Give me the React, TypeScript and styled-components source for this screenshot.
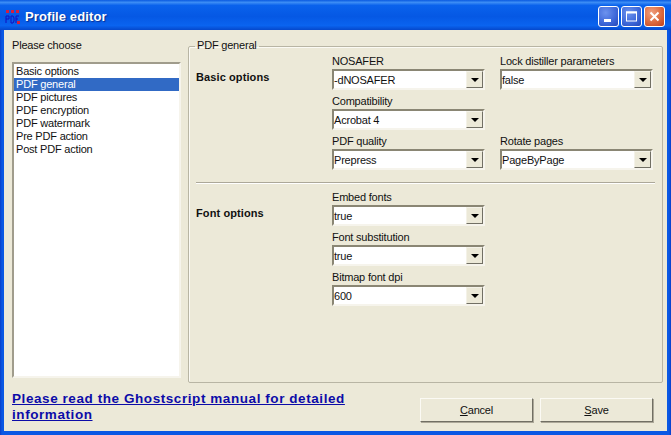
import React from 'react';
import styled, { createGlobalStyle } from 'styled-components';

const GlobalStyle = createGlobalStyle`
	html, body {
		margin: 0;
		padding: 0;
		background: #0a50d8;
	}
	body {
		font-family: 'Liberation Sans', Arial, sans-serif;
		font-size: 11px;
		letter-spacing: -0.2px;
		color: #111;
	}
`;

const Win = styled.div`
	width: 671px;
	height: 435px;
	display: flex;
	flex-direction: column;
	overflow: hidden;
	background: linear-gradient(90deg, #0a3ec8 0, #0a58e4 2px, #0a58e4 669px, #0a3ec8 671px);
`;
const TitleBar = styled.div`
	height: 30px;
	flex: none;
	box-sizing: border-box;
	display: flex;
	align-items: center;
	padding: 3px 6px 0 5px;
	background: linear-gradient(180deg, #0a5ae0 0%, #3c8df5 8%, #0a62ec 18%, #0558e4 55%, #0a64f0 85%, #0548cc 100%);
`;
const TitleText = styled.div`
	flex: 1;
	margin-left: 4px;
	color: #fff;
	font-size: 13px;
	font-weight: bold;
	letter-spacing: 0.1px;
	text-shadow: 1px 1px 1px #0a2f90;
`;
const WinBtn = styled.div<{ $close?: boolean }>`
	width: 21px;
	height: 21px;
	margin-left: 2px;
	box-sizing: border-box;
	border: 1px solid #fff;
	border-radius: 3px;
	display: flex;
	align-items: center;
	justify-content: center;
	background: ${(p) =>
		p.$close
			? 'radial-gradient(circle at 35% 30%, #f0a080 0%, #dc6a3e 55%, #c03f1c 100%)'
			: 'radial-gradient(circle at 35% 30%, #6c92ee 0%, #3c66d8 60%, #2448b8 100%)'};
`;
const Body = styled.div`
	flex: 1;
	margin: 0 4px 4px 4px;
	background: #ece9d8;
	display: flex;
	flex-direction: column;
	padding: 10px 4px 0 8px;
	min-height: 0;
`;
const Main = styled.div`
	display: flex;
	gap: 7px;
	height: 347px;
	flex: none;
`;
const Side = styled.div`
	width: 169px;
	flex: none;
	display: flex;
	flex-direction: column;
`;
const SideLabel = styled.div`
	height: 22px;
	line-height: 10px;
`;
const ListBox = styled.div`
	box-sizing: border-box;
	height: 316px;
	padding: 1px 0 0;
	background: #fff;
	border: 2px solid;
	border-color: #a09c8c #f6f4ec #f6f4ec #a09c8c;
`;
const ListRow = styled.div<{ $on?: boolean }>`
	height: 13px;
	line-height: 13px;
	padding-left: 2px;
	color: ${(p) => (p.$on ? '#fff' : '#111')};
	background: ${(p) => (p.$on ? '#316ac5' : 'transparent')};
`;
const Group = styled.fieldset`
	flex: 1;
	margin: -1px 0 0;
	box-sizing: border-box;
	height: 344px;
	padding: 0 0 0 7px;
	border: 1px solid #b8b5a4;
	border-radius: 2px;
	box-shadow: inset 1px 1px 0 #fbfaf4;
	min-width: 0;
`;
const Legend = styled.legend`
	padding: 0 2px 2px;
	margin-left: -1px;
	line-height: 12px;
`;
const Section = styled.div<{ $height: number; $top: number }>`
	display: flex;
	box-sizing: border-box;
	height: ${(p) => p.$height}px;
	padding-top: ${(p) => p.$top}px;
`;
const SectionTitle = styled.div<{ $pad: number }>`
	width: 136px;
	flex: none;
	padding-top: ${(p) => p.$pad}px;
	font-weight: bold;
	letter-spacing: 0.1px;
	line-height: 13px;
`;
const Column = styled.div<{ $right?: boolean }>`
	width: 153px;
	flex: none;
	margin-left: ${(p) => (p.$right ? '15px' : '0')};
	display: flex;
	flex-direction: column;
`;
const Field = styled.div`
	height: 40px;
`;
const FieldLabel = styled.div`
	height: 15px;
	line-height: 12px;
	padding-top: 1px;
	box-sizing: border-box;
	white-space: nowrap;
`;
const Combo = styled.div`
	box-sizing: border-box;
	height: 21px;
	display: flex;
	align-items: center;
	background: #fff;
	border: 2px solid;
	border-color: #8a8674 #f6f4ec #f6f4ec #8a8674;
`;
const ComboText = styled.div`
	flex: 1;
`;
const ComboArrow = styled.div`
	width: 17px;
	height: 17px;
	box-sizing: border-box;
	display: flex;
	align-items: center;
	justify-content: center;
	background: #ece9d8;
	border: 1px solid;
	border-color: #f4f2e8 #716f64 #716f64 #f4f2e8;
`;
const Caret = styled.div`
	width: 0;
	height: 0;
	border-left: 4px solid transparent;
	border-right: 4px solid transparent;
	border-top: 4px solid #000;
`;
const Separator = styled.div`
	height: 2px;
	width: 459px;
	background: linear-gradient(180deg, #aca899 50%, #fff 50%);
`;
const Footer = styled.div`
	flex: 1;
	display: flex;
	align-items: flex-start;
	justify-content: space-between;
	padding-top: 4px;
`;
const ManualLink = styled.a`
	width: 345px;
	color: #0c0ca8;
	font-size: 13.5px;
	line-height: 16px;
	font-weight: bold;
	letter-spacing: 0.57px;
	text-decoration: underline;
`;
const Buttons = styled.div`
	display: flex;
	gap: 7px;
	margin-right: 10px;
	padding-top: 7px;
`;
const Button = styled.div`
	width: 113px;
	height: 24px;
	box-sizing: border-box;
	display: flex;
	align-items: center;
	justify-content: center;
	background: #ece9d8;
	border: 1px solid;
	border-color: #fbfaf4 #716f64 #716f64 #fbfaf4;
	box-shadow: 1px 1px 0 #aca899;
`;

type FieldDef = { label?: string; value?: string };

const Select = ({ label, value }: FieldDef) => (
	<Field>
		<FieldLabel>{label}</FieldLabel>
		<Combo>
			<ComboText>{value}</ComboText>
			<ComboArrow>
				<Caret />
			</ComboArrow>
		</Combo>
	</Field>
);

const items = [
	'Basic options',
	'PDF general',
	'PDF pictures',
	'PDF encryption',
	'PDF watermark',
	'Pre PDF action',
	'Post PDF action',
];

const AppIcon = () => (
	<svg width="16" height="16" viewBox="0 0 16 16">
		<rect x="1" y="1" width="3" height="3" fill="#d02040" />
		<rect x="6" y="1" width="3" height="3" fill="#d02040" />
		<rect x="11" y="1" width="3" height="3" fill="#d02040" />
		<path d="M1 7v7M1 7h3v3H1M6 7v7h2l1-2v-3l-1-2H6M11 7v7M11 7h3M11 10h2" stroke="#1010c0" strokeWidth="1" fill="none" />
		<rect x="12" y="12" width="3" height="3" fill="#d02040" />
	</svg>
);

const App = (): JSX.Element => (
	<Win>
		<GlobalStyle />
		<TitleBar>
			<AppIcon />
			<TitleText>Profile editor</TitleText>
			<WinBtn>
				<svg width="13" height="13" viewBox="0 0 13 13">
					<rect x="2" y="9" width="7" height="3" fill="#fff" />
				</svg>
			</WinBtn>
			<WinBtn>
				<svg width="13" height="13" viewBox="0 0 13 13">
					<rect x="1.5" y="2" width="10" height="9" fill="none" stroke="#fff" />
					<rect x="1" y="1.5" width="11" height="2" fill="#fff" />
				</svg>
			</WinBtn>
			<WinBtn $close>
				<svg width="13" height="13" viewBox="0 0 13 13">
					<path d="M2.5 2.5l8 8M10.5 2.5l-8 8" stroke="#fff" strokeWidth="2" />
				</svg>
			</WinBtn>
		</TitleBar>
		<Body>
			<Main>
				<Side>
					<SideLabel>Please choose</SideLabel>
					<ListBox>
						{items.map((it) => (
							<ListRow key={it} $on={it === 'PDF general'}>
								{it}
							</ListRow>
						))}
					</ListBox>
				</Side>
				<Group>
					<Legend>PDF general</Legend>
					<Section $height={129} $top={1}>
						<SectionTitle $pad={17}>Basic options</SectionTitle>
						<Column>
							<Select label="NOSAFER" value="-dNOSAFER" />
							<Select label="Compatibility" value="Acrobat 4" />
							<Select label="PDF quality" value="Prepress" />
						</Column>
						<Column $right>
							<Select label="Lock distiller parameters" value="false" />
							<Field />
							<Select label="Rotate pages" value="PageByPage" />
						</Column>
					</Section>
					<Separator />
					<Section $height={130} $top={6}>
						<SectionTitle $pad={17}>Font options</SectionTitle>
						<Column>
							<Select label="Embed fonts" value="true" />
							<Select label="Font substitution" value="true" />
							<Select label="Bitmap font dpi" value="600" />
						</Column>
					</Section>
				</Group>
			</Main>
			<Footer>
				<ManualLink href="#">Please read the Ghostscript manual for detailed information</ManualLink>
				<Buttons>
					<Button>
						<span>
							<u>C</u>ancel
						</span>
					</Button>
					<Button>
						<span>
							<u>S</u>ave
						</span>
					</Button>
				</Buttons>
			</Footer>
		</Body>
	</Win>
);

export default App;
